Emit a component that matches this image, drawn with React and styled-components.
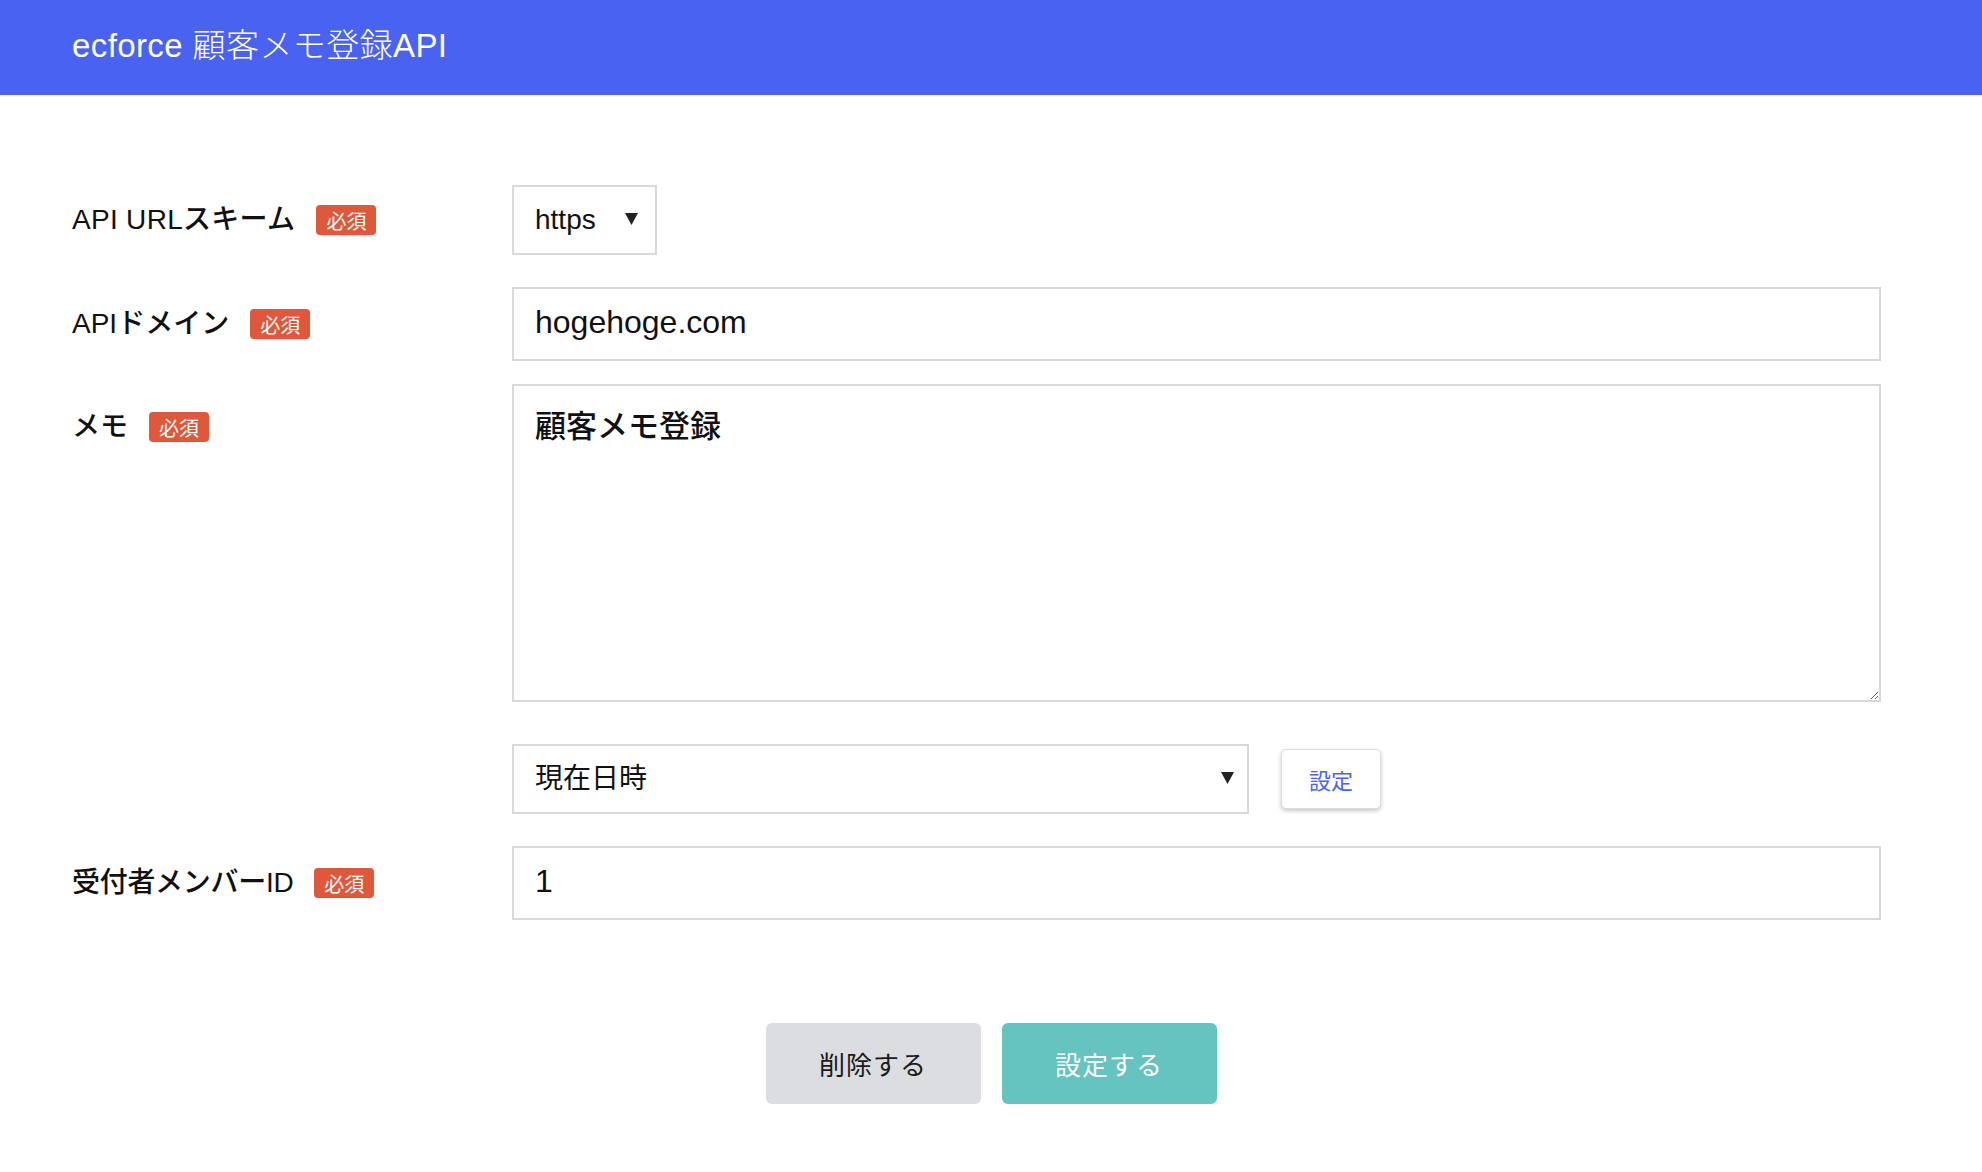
import React from "react";
import styled, { createGlobalStyle } from "styled-components";

const Global = createGlobalStyle`
  * { box-sizing: border-box; }
  body {
    margin: 0;
    background: #ffffff;
    font-family: "Liberation Sans", "Noto Sans CJK JP", sans-serif;
    color: #1a1a1a;
  }
`;

const Header = styled.header`
  height: 95px;
  background: #4a62f2;
  display: flex;
  align-items: center;
  padding: 0 0 10px 72px;
`;

const Title = styled.h1`
  margin: 0;
  font-size: 33px;
  font-weight: 300;
  color: #ffffff;
  letter-spacing: 0.4px;
`;

const Form = styled.form`
  padding: 90px 101px 60px 72px;
`;

const Row = styled.div`
  display: flex;
  align-items: ${(p) => (p.$top ? "flex-start" : "center")};
  margin-bottom: ${(p) => p.$mb}px;
`;

const LabelCell = styled.div`
  width: 440px;
  flex: none;
  display: flex;
  align-items: center;
  gap: 21px;
  padding-top: ${(p) => (p.$top ? "23px" : "0")};
`;

const Label = styled.label`
  font-size: 28px;
  font-weight: 500;
  line-height: 40px;
  color: #111;
  letter-spacing: ${(p) => p.$ls || 0}px;
`;

const Badge = styled.span`
  display: inline-flex;
  align-items: center;
  justify-content: center;
  width: 60px;
  height: 30px;
  border-radius: 4px;
  background: #e0583c;
  color: #fff;
  font-size: 20px;
  font-family: "Noto Sans CJK JP", sans-serif;
`;

const Control = styled.div`
  flex: 1;
  display: flex;
  align-items: center;
  gap: 32px;
`;

const TextInput = styled.input`
  width: 100%;
  height: 74px;
  border: 2px solid #d9d9d9;
  padding: 14px 21px 18px;
  font-size: 32px;
  line-height: 38px;
  font-family: "Liberation Sans", "Noto Sans CJK JP", sans-serif;
  color: #111;
  outline: none;
  background: #fff;
`;

const TextArea = styled.textarea`
  width: 100%;
  height: 318px;
  border: 2px solid #d9d9d9;
  padding: 18px 21px;
  font-size: 31px;
  line-height: 46px;
  font-weight: 500;
  font-family: "Liberation Sans", "Noto Sans CJK JP", sans-serif;
  color: #111;
  outline: none;
  resize: vertical;
  display: block;
`;

const SelectWrap = styled.div`
  position: relative;
  width: ${(p) => p.$w}px;
  flex: none;
`;

const Select = styled.select`
  appearance: none;
  -webkit-appearance: none;
  width: 100%;
  height: 70px;
  border: 2px solid #d9d9d9;
  border-radius: 0;
  background: #fff;
  padding: 0 40px 2px 21px;
  font-size: 28px;
  font-family: "Liberation Sans", "Noto Sans CJK JP", sans-serif;
  color: #111;
  outline: none;
`;

const Arrow = styled.svg`
  position: absolute;
  right: ${(p) => p.$r}px;
  top: 50%;
  margin-top: -7px;
  width: 13px;
  height: 12px;
  pointer-events: none;
`;

const SmallButton = styled.button`
  width: 100px;
  height: 60px;
  border: 1px solid #dcdcdc;
  border-radius: 5px;
  background: #fff;
  box-shadow: 0 2px 4px rgba(0, 0, 0, 0.22);
  color: #4a62f2;
  font-size: 22px;
  font-family: "Noto Sans CJK JP", sans-serif;
  cursor: pointer;
`;

const Actions = styled.div`
  display: flex;
  justify-content: center;
  gap: 21px;
  margin-left: -72px;
  margin-right: -101px;
`;

const ActionButton = styled.button`
  width: 215px;
  height: 81px;
  border: none;
  border-radius: 6px;
  background: ${(p) => (p.$primary ? "#65c3c0" : "#dcdde1")};
  color: ${(p) => (p.$primary ? "#ffffff" : "#1a1a1a")};
  font-size: 26px;
  font-family: "Noto Sans CJK JP", sans-serif;
  letter-spacing: 1px;
  padding-bottom: 2px;
  cursor: pointer;
`;

const DownArrow = ({ right }) => (
  <Arrow $r={right} viewBox="0 0 13 12">
    <path d="M0 0 L13 0 L6.5 12 Z" fill="#222" />
  </Arrow>
);

export default function App() {
  return (
    <>
      <Global />
      <Header>
        <Title>ecforce 顧客メモ登録API</Title>
      </Header>
      <Form onSubmit={(e) => e.preventDefault()}>
        <Row $mb={32}>
          <LabelCell>
            <Label $ls={0.3}>API URLスキーム</Label>
            <Badge>必須</Badge>
          </LabelCell>
          <Control>
            <SelectWrap $w={145}>
              <Select defaultValue="https">
                <option value="https">https</option>
                <option value="http">http</option>
              </Select>
              <DownArrow right={19} />
            </SelectWrap>
          </Control>
        </Row>
        <Row $mb={23}>
          <LabelCell>
            <Label>APIドメイン</Label>
            <Badge>必須</Badge>
          </LabelCell>
          <Control>
            <TextInput defaultValue="hogehoge.com" />
          </Control>
        </Row>
        <Row $mb={42} $top>
          <LabelCell $top>
            <Label>メモ</Label>
            <Badge>必須</Badge>
          </LabelCell>
          <Control>
            <TextArea defaultValue="顧客メモ登録" />
          </Control>
        </Row>
        <Row $mb={32}>
          <LabelCell />
          <Control>
            <SelectWrap $w={737}>
              <Select defaultValue="now">
                <option value="now">現在日時</option>
              </Select>
              <DownArrow right={15} />
            </SelectWrap>
            <SmallButton type="button">設定</SmallButton>
          </Control>
        </Row>
        <Row $mb={103}>
          <LabelCell>
            <Label $ls={-0.3}>受付者メンバーID</Label>
            <Badge>必須</Badge>
          </LabelCell>
          <Control>
            <TextInput defaultValue="1" />
          </Control>
        </Row>
        <Actions>
          <ActionButton type="button">削除する</ActionButton>
          <ActionButton type="submit" $primary>
            設定する
          </ActionButton>
        </Actions>
      </Form>
    </>
  );
}
